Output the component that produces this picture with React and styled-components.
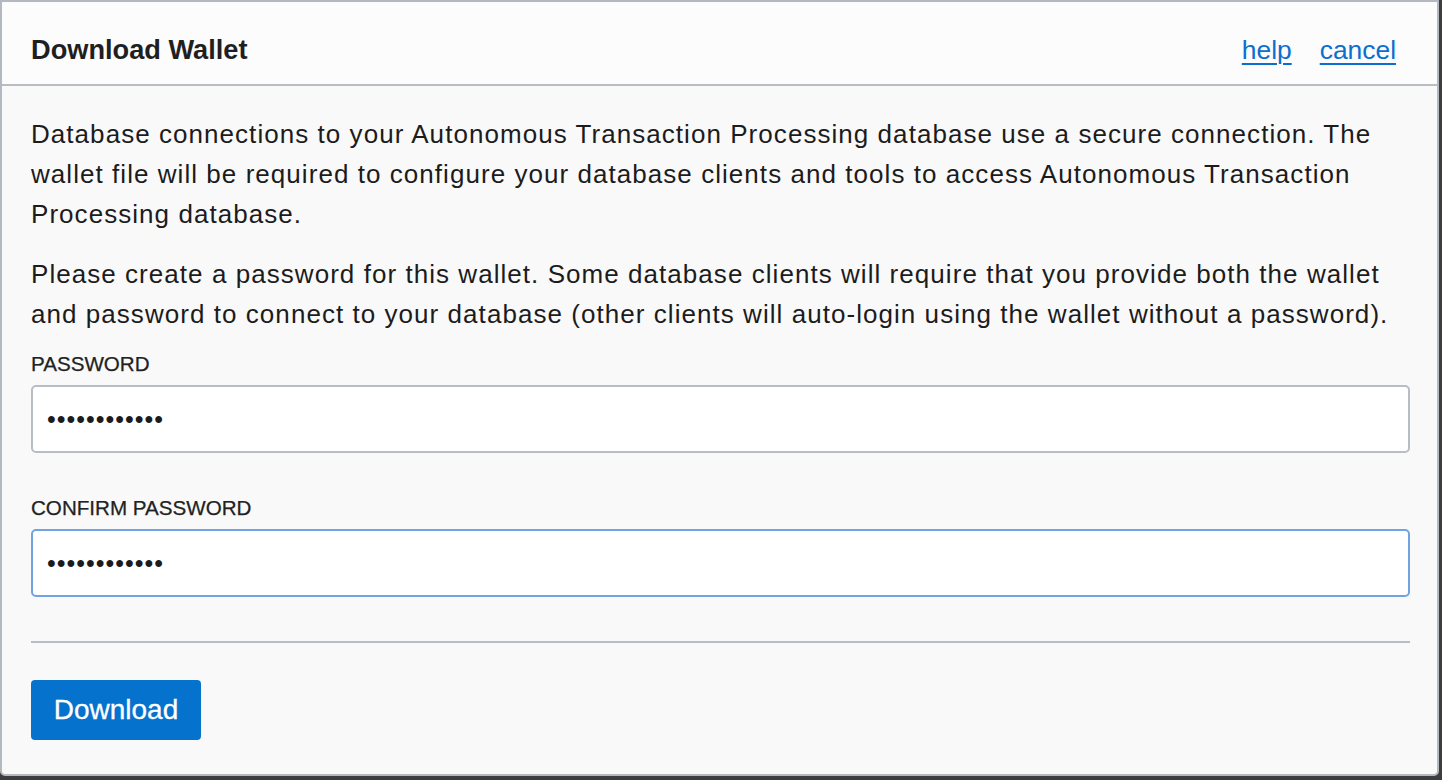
import React from "react";
import styled, { createGlobalStyle } from "styled-components";

const Global = createGlobalStyle`
  html, body { margin: 0; padding: 0; }
  body {
    background: #3d3d3d;
    font-family: "Liberation Sans", Arial, Helvetica, sans-serif;
    width: 1442px;
    height: 780px;
    overflow: hidden;
  }
`;

const Dialog = styled.div`
  box-sizing: border-box;
  width: 1439px;
  height: 776px;
  border: 2px solid #b4b8bf;
  border-radius: 0 0 5px 5px;
  background: #f9f9fa;
  display: flex;
  flex-direction: column;
  overflow: hidden;
`;

const Header = styled.header`
  box-sizing: border-box;
  height: 84px;
  flex: none;
  background: #fcfcfc;
  border-bottom: 2px solid #b8bcc3;
  display: flex;
  align-items: center;
  justify-content: space-between;
  padding: 14px 41px 0 29px;
`;

const Title = styled.h1`
  margin: 0;
  font-size: 27.2px;
  font-weight: 700;
  color: #1f1f1f;
`;

const Links = styled.nav`
  display: flex;
  gap: 28px;
`;

const Link = styled.a`
  font-size: 26.4px;
  color: #0a6fcf;
  text-decoration: underline;
  text-underline-offset: 4px;
  text-decoration-thickness: 2px;
  cursor: pointer;
`;

const Body = styled.main`
  flex: 1;
  padding: 28px 27px 0 29px;
  display: flex;
  flex-direction: column;
`;

const Paragraph = styled.p`
  margin: 0 0 ${(p) => p.$gap}px;
  font-size: 26px;
  letter-spacing: 1.05px;
  line-height: 40px;
  color: #1c1c1c;
`;

const Label = styled.label`
  display: block;
  font-size: 20.6px;
  line-height: 24px;
  color: #222;
  margin: 0 0 9px;
  -webkit-text-stroke: 0.25px #222;
`;

const Field = styled.div`
  margin-bottom: ${(p) => p.$gap}px;
`;

const Input = styled.input`
  box-sizing: border-box;
  display: block;
  width: 100%;
  height: 68px;
  padding: 0 14px;
  border: 2px solid ${(p) => (p.$focused ? "#70a3e2" : "#b8bcc3")};
  border-radius: 5px;
  background: #fff;
  font-family: "Liberation Sans", Arial, sans-serif;
  font-size: 25px;
  letter-spacing: 1px;
  color: #1c1c1c;
  outline: none;
`;

const Separator = styled.hr`
  margin: 0 0 37px;
  border: none;
  border-top: 2px solid #b8bcc3;
  height: 0;
`;

const Actions = styled.div`
  display: flex;
`;

const Button = styled.button`
  box-sizing: border-box;
  width: 170px;
  height: 60px;
  border: none;
  border-radius: 4px;
  background: #0572ce;
  color: #fff;
  font-family: "Liberation Sans", Arial, sans-serif;
  font-size: 28px;
  -webkit-text-stroke: 0.3px #fff;
  cursor: pointer;
`;

export default function App() {
  return (
    <>
      <Global />
      <Dialog>
        <Header>
          <Title>Download Wallet</Title>
          <Links>
            <Link>help</Link>
            <Link>cancel</Link>
          </Links>
        </Header>
        <Body>
          <Paragraph $gap={20}>
            Database connections to your Autonomous Transaction Processing database use a secure
            connection. The wallet file will be required to configure your database clients and
            tools to access Autonomous Transaction Processing database.
          </Paragraph>
          <Paragraph $gap={18}>
            Please create a password for this wallet. Some database clients will require that you
            provide both the wallet and password to connect to your database (other clients will
            auto-login using the wallet without a password).
          </Paragraph>
          <Field $gap={43}>
            <Label>PASSWORD</Label>
            <Input type="password" defaultValue="walletpass12" readOnly />
          </Field>
          <Field $gap={44}>
            <Label>CONFIRM PASSWORD</Label>
            <Input type="password" defaultValue="walletpass12" readOnly $focused />
          </Field>
          <Separator />
          <Actions>
            <Button>Download</Button>
          </Actions>
        </Body>
      </Dialog>
    </>
  );
}
